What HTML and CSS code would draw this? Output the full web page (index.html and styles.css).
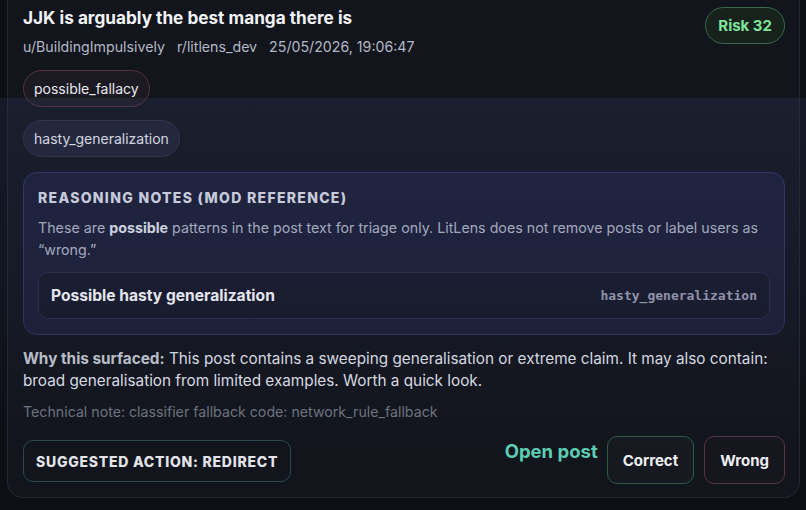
FILE: index.html
```html
<!DOCTYPE html>
<html lang="en">
<head>
<meta charset="utf-8">
<title>LitLens triage card</title>
<link rel="stylesheet" href="styles.css">
</head>
<body>
<div class="page">
  <article class="card">
    <header class="card-head">
      <div class="head-text">
        <h1 class="title">JJK is arguably the best manga there is</h1>
        <div class="meta">
          <span>u/BuildingImpulsively</span>
          <span>r/litlens_dev</span>
          <span>25/05/2026, 19:06:47</span>
        </div>
      </div>
      <span class="risk">Risk 32</span>
    </header>

    <div class="chips">
      <span class="chip chip-fallacy">possible_fallacy</span>
      <span class="chip chip-tag">hasty_generalization</span>
    </div>

    <section class="notes">
      <h2 class="notes-title">REASONING NOTES (MOD REFERENCE)</h2>
      <p class="notes-text">These are <strong>possible</strong> patterns in the post text for triage only. LitLens does not remove posts or label users as “wrong.”</p>
      <div class="note-item">
        <span class="note-name">Possible hasty generalization</span>
        <code class="note-code">hasty_generalization</code>
      </div>
    </section>

    <p class="why"><strong>Why this surfaced:</strong> This post contains a sweeping generalisation or extreme claim. It may also contain: broad generalisation from limited examples. Worth a quick look.</p>
    <p class="tech">Technical note: classifier fallback code: network_rule_fallback</p>

    <footer class="actions">
      <span class="suggested">SUGGESTED ACTION: REDIRECT</span>
      <div class="buttons">
        <a class="open-post" href="#">Open post</a>
        <button class="btn btn-correct" type="button">Correct</button>
        <button class="btn btn-wrong" type="button">Wrong</button>
      </div>
    </footer>
  </article>
</div>
</body>
</html>
```

FILE: styles.css
```css
* { box-sizing: border-box; }

html, body {
  margin: 0;
  padding: 0;
  background: #0d0f15;
  font-family: Inter, "Noto Sans", "Liberation Sans", sans-serif;
  color: #e6e8ee;
  height: 510px;
  overflow: hidden;
}

body { position: relative; }

body::after {
  content: "";
  position: absolute;
  left: 0;
  right: 0;
  top: 98px;
  height: 412px;
  background: linear-gradient(180deg, rgba(70, 80, 140, 0.16) 0%, rgba(70, 80, 140, 0.09) 45%, rgba(70, 80, 140, 0) 85%);
  pointer-events: none;
}

.page {
  padding: 0 6px 0 7px;
}

.card {
  background: #12151c;
  border: 1px solid #22262f;
  border-top: none;
  border-radius: 0 0 16px 16px;
  padding: 7px 14px 13px 15px;
}

.card-head {
  display: flex;
  justify-content: space-between;
  align-items: flex-start;
}

.title {
  margin: 0;
  font-size: 17.2px;
  line-height: 22px;
  font-weight: 700;
  color: #f2f3f7;
}

.meta {
  margin-top: 8px;
  display: flex;
  gap: 12px;
  font-size: 14.2px;
  line-height: 20px;
  color: #b4b8c4;
}

.risk {
  display: inline-flex;
  align-items: center;
  height: 37px;
  padding: 0 12px;
  border-radius: 19px;
  border: 1px solid #3a6a4c;
  background: #17221d;
  color: #7fe49b;
  font-weight: 700;
  font-size: 15px;
}

.chips {
  margin-top: 13px;
  display: flex;
  flex-direction: column;
  align-items: flex-start;
  gap: 13px;
}

.chip {
  display: inline-flex;
  align-items: center;
  height: 37px;
  padding: 0 10px;
  border-radius: 19px;
  font-size: 14px;
  color: #e8e9ee;
}

.chip-fallacy {
  border: 1px solid #553242;
  background: #1b1a22;
}

.chip-tag {
  border: 1px solid #2e3142;
  background: #1e2131;
}

.notes {
  margin-top: 15px;
  border: 1px solid #2d3260;
  border-radius: 14px;
  background: #1b1d33;
  padding: 15px 14px 15px 14px;
}

.notes-title {
  margin: 0;
  font-size: 14px;
  line-height: 20px;
  font-weight: 800;
  letter-spacing: 1.3px;
  color: #d9dbe4;
}

.notes-text {
  margin: 9px 0 0;
  font-size: 14.25px;
  line-height: 22px;
  color: #afb3c3;
}

.notes-text strong {
  color: #dfe1ea;
  font-weight: 700;
}

.note-item {
  margin-top: 11px;
  height: 47px;
  display: flex;
  align-items: center;
  justify-content: space-between;
  padding: 0 12px;
  border: 1px solid #272b45;
  border-radius: 10px;
  background: #161828;
}

.note-name {
  font-size: 15.6px;
  font-weight: 700;
  color: #f2f3f7;
}

.note-code {
  font-family: "DejaVu Sans Mono", "Liberation Mono", monospace;
  font-size: 13px;
  font-weight: 700;
  color: #9899ad;
}

.why {
  margin: 13px 0 0;
  font-size: 15.3px;
  line-height: 22px;
  color: #dcdee4;
}

.why strong {
  color: #bfc2cb;
  font-weight: 700;
}

.tech {
  margin: 10px 0 0;
  font-size: 14.2px;
  line-height: 20px;
  color: #6e737f;
}

.actions {
  margin-top: 14px;
  display: flex;
  justify-content: space-between;
  align-items: flex-start;
}

.suggested {
  margin-top: 4px;
  display: inline-flex;
  align-items: center;
  height: 42px;
  padding: 0 12px;
  border: 1px solid #2a4a50;
  border-radius: 10px;
  font-size: 14px;
  font-weight: 800;
  letter-spacing: 0.75px;
  color: #e2e4ea;
}

.buttons {
  display: flex;
  align-items: flex-start;
  gap: 10px;
}

.open-post {
  margin-right: -1px;
  line-height: 30px;
  font-size: 18.5px;
  font-weight: 700;
  color: #5ccdb2;
  text-decoration: none;
}

.btn {
  height: 48px;
  padding: 0 15px;
  border-radius: 10px;
  background: #161a20;
  font-family: inherit;
  font-size: 15px;
  font-weight: 700;
  color: #eceef2;
  cursor: pointer;
}

.btn-correct {
  border: 1px solid #2f5a44;
}

.btn-wrong {
  border: 1px solid #583247;
  background: #16171e;
}
```
